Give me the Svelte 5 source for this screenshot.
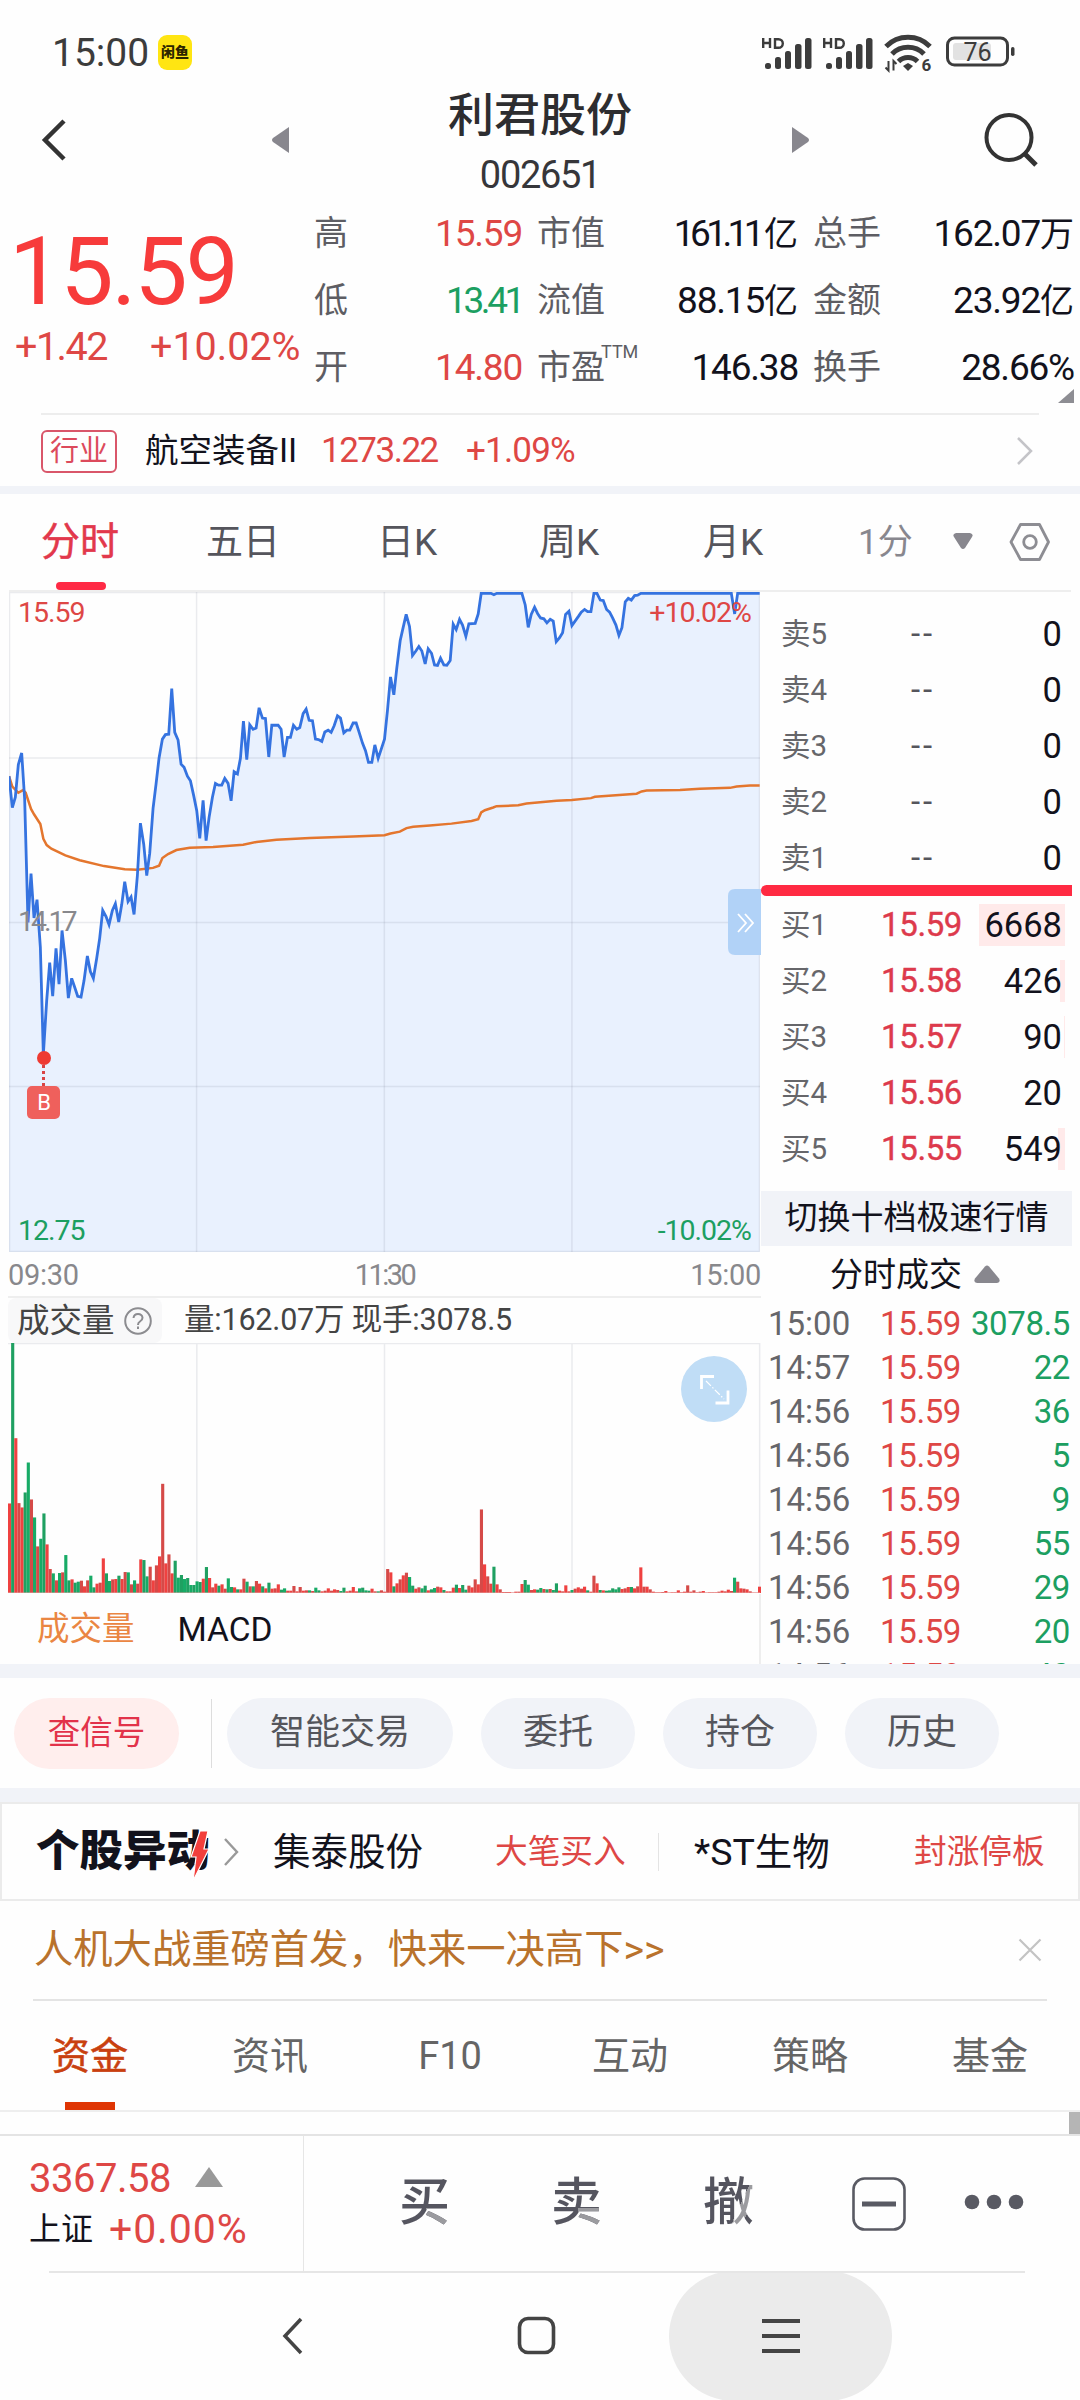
<script>
  const stats = [
    { label: '高', value: '15.59', tone: 'up' },
    { label: '市值', value: '161.11', unit: '亿', fit: 'narrow' },
    { label: '总手', value: '162.07', unit: '万' },
    { label: '低', value: '13.41', tone: 'down', fit: 'tight' },
    { label: '流值', value: '88.15', unit: '亿' },
    { label: '金额', value: '23.92', unit: '亿' },
    { label: '开', value: '14.80', tone: 'up' },
    { label: '市盈', sup: 'TTM', value: '146.38' },
    { label: '换手', value: '28.66%' }
  ];

  const periods = ['分时', '五日', '日K', '周K', '月K'];

  const asks = [5, 4, 3, 2, 1];
  const bids = [
    { n: 1, price: '15.59', qty: '6668', bar: 86 },
    { n: 2, price: '15.58', qty: '426', bar: 5 },
    { n: 3, price: '15.57', qty: '90', bar: 1 },
    { n: 4, price: '15.56', qty: '20', bar: 0 },
    { n: 5, price: '15.55', qty: '549', bar: 7 }
  ];

  const ticks = [
    ['15:00', '3078.5'], ['14:57', '22'], ['14:56', '36'], ['14:56', '5'], ['14:56', '9'],
    ['14:56', '55'], ['14:56', '29'], ['14:56', '20'], ['14:56', '40']
  ];

  // Intraday price line, in chart units (2252 x 1476, one minute = 9.38)
  const price =
    '28,438 38,508 47,485 56,412 66,386 75,490 85,765 94,656 103,755 112,714 122,820 131,1060 141,940 150,855 159,930 169,823 178,903 187,783 197,850 206,934 216,890 225,910 234,930 244,932 253,895 263,840 272,875 281,890 291,845 300,800 309,738 319,752 328,770 338,738 347,723 357,764 366,725 375,674 385,718 394,708 403,747 413,660 422,543 432,590 441,660 450,610 460,510 469,455 478,397 488,355 497,345 507,344 516,242 525,340 535,357 544,411 553,418 563,438 572,448 582,482 591,515 600,577 610,492 619,582 628,530 638,485 647,454 656,458 666,458 675,443 685,454 694,493 703,428 713,433 722,398 731,315 741,401 750,323 760,333 769,330 778,285 788,308 797,309 807,395 816,324 835,324 844,333 853,395 863,351 872,351 881,324 891,333 900,329 910,298 919,288 928,313 938,314 947,355 956,356 966,360 975,339 985,335 994,340 1003,325 1013,303 1022,308 1032,341 1041,335 1050,335 1060,319 1069,319 1078,340 1088,364 1097,381 1106,407 1116,407 1125,368 1135,398 1144,378 1154,355 1163,290 1172,216 1182,256 1191,195 1201,135 1210,105 1219,76 1229,103 1238,168 1248,158 1257,148 1266,158 1276,187 1285,153 1295,163 1304,189 1313,190 1322,174 1332,189 1341,190 1351,179 1360,98 1369,110 1379,87 1388,100 1398,125 1407,97 1426,96 1435,75 1444,29 1473,29 1482,32 1491,29 1566,29 1576,55 1585,105 1594,76 1604,60 1613,74 1622,84 1632,86 1641,95 1651,87 1660,91 1669,137 1679,128 1688,117 1697,76 1707,69 1716,101 1735,81 1744,71 1754,65 1763,70 1773,70 1782,29 1791,29 1801,44 1810,45 1820,65 1829,71 1838,84 1848,100 1857,123 1866,106 1876,48 1885,40 1894,44 1904,34 1913,33 1923,29 2194,29 2204,75 2213,29 2279,29';

  const average =
    '28,438 38,461 56,475 70,469 78,475 94,511 103,523 122,545 131,578 141,592 155,600 197,615 240,626 313,639 375,646 413,647 460,643 478,638 488,621 505,612 530,603 570,598 640,596 730,591 770,585 830,580 930,576 1060,573 1154,570 1172,566 1200,562 1220,554 1240,551 1290,548 1355,544 1415,538 1435,534 1444,519 1455,514 1480,508 1490,505 1555,503 1580,499 1670,493 1716,491 1773,487 1785,484 1910,477 1925,472 1940,470 2040,469 2100,466 2190,464 2210,461 2250,459 2279,459';

  // Volume per minute: R = rising, G = falling, then the bar's height
  const volumes =
    'R269 G751 R465 R270 R257 G302 G392 R281 G227 R140 G163 G239 R146 R72 G59 R38 G60 R62 G114 G38 R41 G31 G34 R37 R20 R38 G52 G17 R28 R31 R104 G59 G36 R41 R42 G52 R42 R63 G62 R26 G38 R28 R101 G99 G50 R79 R38 R83 R110 R328 R89 R116 R59 G97 G46 G54 G42 G45 G24 G24 G35 G33 R43 G78 R45 R17 R28 G22 R26 R13 G44 G18 R17 G11 R11 R43 G34 R20 G20 R36 R28 G20 R14 G31 R13 R14 R26 G10 G14 R7 R7 R21 R5 R18 R7 R8 G8 R6 G16 G8 R5 R7 R14 R7 R11 R9 G6 G16 R5 R7 R18 R5 G14 G16 G8 G7 R13 R5 G5 R8 R4 R72 R62 G20 R29 R41 R53 R61 G48 G22 R13 R17 G14 G22 R8 G11 G15 R19 R17 G9 R5 R5 R16 G25 R15 G24 G10 R22 R17 R41 R26 R251 R86 R50 R28 G79 R26 R11 R3 R3 R3 R1 R4 R4 R27 G39 G25 R9 R11 G10 G15 R12 G11 R12 G9 G29 R7 R5 R23 R5 G9 R13 R17 R13 R19 G8 R4 R52 R29 G9 R8 G7 G8 G14 G11 G17 R12 R14 R18 G18 R14 R20 R77 R19 R19 R11 R4 R2 R2 R3 R6 R1 R2 R2 R8 R2 R4 R23 R4 R8 R2 R4 R6 R1 R2 R2 R2 R4 R7 R5 R10 R6 G46 R34 R14 R13 R11 R5 R1 R1 R19'
      .split(' ')
      .map((v) => ({ up: v[0] === 'R', h: +v.slice(1) }));

  const infoTabs = ['资金', '资讯', 'F10', '互动', '策略', '基金'];
  const actions = ['智能交易', '委托', '持仓', '历史'];
</script>

<div class="screen">
  <div class="status">
    <span class="clock">15:00</span>
    <span class="app-badge">闲鱼</span>
    <svg class="status-icons" viewBox="0 0 256 46" width="256" height="46" fill="#3c3c3c">
      {#each [0, 61] as dx}
        <g transform="translate({dx} 0)">
          <path d="M1.200 5v10M8 5v10M1.200 10H8M13 6.200h3.500a4 4 0 0 1 0 8.600H13z" fill="none" stroke="#3c3c3c" stroke-width="2.400" />
          <rect x="3" y="30" width="6" height="6" rx="2.500" />
          <rect x="13" y="24" width="6" height="12" rx="2.500" />
          <rect x="23" y="18" width="6" height="18" rx="2.500" />
          <rect x="33" y="11" width="6.500" height="25" rx="2.500" />
          <rect x="43" y="5" width="6.500" height="31" rx="2.500" />
        </g>
      {/each}
      <g fill="none" stroke="#3c3c3c" stroke-width="5">
        <path d="M124 13.500a31 31 0 0 1 44 0" />
        <path d="M130 21a22.500 22.500 0 0 1 32 0" />
        <path d="M136.500 28.500a13.500 13.500 0 0 1 19 0" />
      </g>
      <path d="M141 33l5-3 5 3-5 5z" />
      <path d="M126.500 28v9.500l-3-3M131.500 37.500V28l3 3" fill="none" stroke="#3c3c3c" stroke-width="2" />
      <text x="159.500" y="38" class="gen">6</text>
      <rect x="185.500" y="5" width="60" height="27" rx="7" fill="none" stroke="#3c3c3c" stroke-width="3" />
      <rect x="191" y="10" width="38" height="17" rx="3" fill="#e2e2e2" />
      <rect x="249" y="14" width="3.500" height="9" rx="1.700" />
      <text x="215.500" y="27.500" class="level">76</text>
    </svg>
  </div>

  <header class="title-bar">
    <svg class="back" width="26" height="42" viewBox="0 0 26 42"><path d="M23 2 4 21l19 19" fill="none" stroke="#333" stroke-width="4.500" /></svg>
    <svg class="prev" width="20" height="28" viewBox="0 0 20 28"><path d="M18 1v26L2 16q-2-2 0-4z" fill="#88878e" /></svg>
    <div class="name">
      <h1>利君股份</h1>
      <span>002651</span>
    </div>
    <svg class="next" width="20" height="28" viewBox="0 0 20 28"><path d="M1 1v26l16-11q2-2 0-4z" fill="#88878e" /></svg>
    <svg class="search" width="56" height="56" viewBox="0 0 56 56" fill="none" stroke="#333" stroke-width="4"><circle cx="26" cy="25.500" r="22.500" /><path d="m42 42 11 11" stroke-width="5" /></svg>
  </header>

  <section class="quote">
    <div class="last up">
      <strong>15.59</strong>
      <div><span>+1.42</span><span>+10.02%</span></div>
    </div>
    <div class="stats">
      {#each stats as s}
        <span class="label">{s.label}{#if s.sup}<sup>{s.sup}</sup>{/if}</span>
        <span class="value {s.tone ?? ''} {s.fit ?? ''}">{s.value}{#if s.unit}<i>{s.unit}</i>{/if}</span>
      {/each}
      <svg class="corner" width="16" height="14" viewBox="0 0 16 14"><path d="M16 0v14H0z" fill="#8d8d93" /></svg>
    </div>
  </section>

  <section class="industry">
    <span class="tag">行业</span>
    <span class="sector">航空装备II</span>
    <span class="up idx">1273.22</span>
    <span class="up chg">+1.09%</span>
    <svg width="18" height="30" viewBox="0 0 18 30"><path d="m2 2 13 13L2 28" fill="none" stroke="#c4c4c8" stroke-width="2.500" /></svg>
  </section>
  <div class="band thin"></div>

  <nav class="periods">
    {#each periods as p, i}
      <span class:active={i === 0}>{p}</span>
    {/each}
    <span class="minute">1分</span>
    <svg class="caret" width="20" height="17" viewBox="0 0 20 17"><path d="M3 0h14q4 1 2 4l-7 11q-2 2-4 0L1 4Q-1 1 3 0z" fill="#88878e" /></svg>
    <svg class="gear" width="42" height="40" viewBox="0 0 42 40" fill="none" stroke="#8d8d93" stroke-width="2.800" stroke-linejoin="round"><path d="M11.500 2.500h19l9 17.500-9 17.500h-19L2 20z" /><circle cx="21" cy="20" r="6.300" /></svg>
  </nav>

  <section class="market">
    <div class="charts">
      <div class="price-chart">
        <svg viewBox="28 26 2252 1476" width="751" height="660" preserveAspectRatio="none">
          <polygon points="{price} 2279,1502 28,1502" fill="#e9f1fe" />
          <g class="grid">
            <path d="M28 397H2280M28 765H2280M28 1132H2280" />
            <path d="M590.500 26V1502M1153.500 26V1502M1716 26V1502" />
            <rect x="29.500" y="27" width="2249" height="1474" />
          </g>
          <polyline class="line avg" points={average} />
          <polyline class="line" points={price} />
        </svg>
        <div class="axis"><span class="up">15.59</span><span class="up">+10.02%</span></div>
        <div class="axis"><span class="mid">14.17</span></div>
        <div class="axis"><span class="down">12.75</span><span class="down">-10.02%</span></div>
        <div class="marker"><i></i><u></u><b>B</b></div>
        <svg class="side-toggle" width="33" height="66" viewBox="0 0 33 66"><path d="M33 0H7Q0 0 0 7v52q0 7 7 7h26z" fill="#b1d2f7" /><path d="m10 25 8 9-8 9M17 25l8 9-8 9" fill="none" stroke="#fff" stroke-width="1.800" /></svg>
      </div>
      <div class="times"><span>09:30</span><span class="noon">11:30</span><span>15:00</span></div>
      <div class="vol-head">
        <span class="vol-name">成交量
          <svg width="28" height="28" viewBox="0 0 28 28" fill="none" stroke="#8c8c90" stroke-width="2"><circle cx="14" cy="14" r="12.800" /><path d="M9.500 11q.5-4 4.500-4t4.500 3.700q0 2.300-2.500 3.800-2 1.200-2 3.500M14 19.500v2.500" /></svg>
        </span>
        <span class="vol-info">量:162.07万 现手:3078.5</span>
      </div>
      <div class="vol-chart">
        <svg viewBox="24 0 2259 751" width="753" height="250" preserveAspectRatio="none">
          <g class="grid">
            <path d="M24 1.500H2280M590.500 0V751M1153.500 0V751M1716 0V751M2279 0V751" />
          </g>
          {#each volumes as v, i}
            <rect x={24 + i * 9.375} y={751 - v.h} width="9.400" height={v.h} fill={v.up ? (i % 2 ? '#d54a48' : '#ef4140') : i % 2 ? '#1fa061' : '#17ab66'} />
          {/each}
          <path d="M24 749.500H2280" stroke="#e8a6a6" stroke-width="1.500" />
        </svg>
        <svg class="expand" width="66" height="66" viewBox="0 0 66 66" fill="none" stroke="#fff"><circle cx="33" cy="33" r="33" fill="#c0ddf6" stroke="none" /><path d="M33 20.500H20.500V33M34.500 47H47V34.500" stroke-width="2.800" /><path d="m25 25 18 18" stroke-width="1.200" stroke-dasharray="7 2 1.500 2" /></svg>
      </div>
      <div class="vol-tabs"><span class="on">成交量</span><span>MACD</span></div>
    </div>

    <aside class="book">
      <div class="asks">
        {#each asks as n}
          <div class="level-row"><span>卖{n}</span><em>--</em><b>0</b></div>
        {/each}
      </div>
      <div class="split"></div>
      <div class="bids">
        {#each bids as b}
          <div class="level-row"><span>买{b.n}</span><em class="bid">{b.price}</em><b><i style="width: {b.bar}px"></i>{b.qty}</b></div>
        {/each}
      </div>
      <div class="switch">切换十档极速行情</div>
      <div class="trade-head">分时成交<svg width="26" height="18" viewBox="0 0 26 18"><path d="M11 1.500q2-2 4 0l10 12q2 4-2 4.500H3q-4-.5-2-4.500z" fill="#88878e" /></svg></div>
      <div class="ticks">
        {#each ticks as [t, q]}
          <div><span>{t}</span><span class="up">15.59</span><span class="down">{q}</span></div>
        {/each}
      </div>
    </aside>
  </section>

  <div class="band"></div>
  <section class="actions">
    <span class="signal">查信号</span>
    <i></i>
    {#each actions as a}<span class="pill">{a}</span>{/each}
  </section>
  <div class="band"></div>

  <section class="movers">
    <strong>个股异动<svg width="20" height="50" viewBox="0 0 20 50"><path d="M10 0h8l-4 18h5L3 50l3-24H1z" fill="#f23f3c" stroke="#fff" stroke-width="1.200" /></svg></strong>
    <svg class="arrow" width="17" height="30" viewBox="0 0 17 30"><path d="m2 2 12 13L2 28" fill="none" stroke="#999" stroke-width="2.400" /></svg>
    <span class="stock">集泰股份</span>
    <span class="event up">大笔买入</span>
    <i></i>
    <span class="stock second">*ST生物</span>
    <span class="event up last-event">封涨停板</span>
  </section>

  <section class="promo">
    <span>人机大战重磅首发，快来一决高下&gt;&gt;</span>
    <svg width="24" height="24" viewBox="0 0 24 24"><path d="m1.500 1.500 21 21m0-21-21 21" stroke="#c3c3c3" stroke-width="2.200" /></svg>
  </section>

  <nav class="info-tabs">
    {#each infoTabs as t, i}<span class:active={i === 0}>{t}</span>{/each}
  </nav>
  <div class="scroll-peek"><i></i></div>

  <footer class="dock">
    <div class="index">
      <div class="up">3367.58<svg width="28" height="20" viewBox="0 0 28 20"><path d="M14 0 28 20H0z" fill="#999" /></svg></div>
      <div><span>上证</span><span class="up pct">+0.00%</span></div>
    </div>
    <span class="op">买</span>
    <span class="op">卖</span>
    <span class="op withdraw">撤</span>
    <svg class="minus" width="54" height="54" viewBox="0 0 54 54" fill="none" stroke="#595a63"><rect x="1.500" y="1.500" width="51" height="51" rx="11" stroke-width="2.600" /><path d="M10 27h34" stroke-width="5" /></svg>
    <svg class="more" width="60" height="16" viewBox="0 0 60 16" fill="#595a63"><circle cx="8" cy="8" r="7.300" /><circle cx="30" cy="8" r="7.300" /><circle cx="52" cy="8" r="7.300" /></svg>
  </footer>

  <div class="sysnav">
    <svg class="nav-back" width="22" height="38" viewBox="0 0 22 38"><path d="M19 2 3 19l16 17" fill="none" stroke="#444" stroke-width="3.500" /></svg>
    <svg class="nav-home" width="40" height="40" viewBox="0 0 40 40"><rect x="2.500" y="2.500" width="34" height="34" rx="8.500" fill="none" stroke="#444" stroke-width="3.600" /></svg>
    <div class="nav-menu"><svg width="38" height="36" viewBox="0 0 38 36"><path d="M0 3h38M0 18h38M0 33h38" stroke="#444" stroke-width="4" /></svg></div>
  </div>
</div>

<style>
  :global(body) { background: #fdfdfe; }
  .screen {
    width: 1080px; height: 2400px; overflow: hidden; background: #fefefe; color: #12121c;
    font-family: Roboto, 'Noto Sans CJK SC', sans-serif; display: flex; flex-direction: column; white-space: nowrap;
  }
  .screen > * { flex: none; box-sizing: border-box; }
  svg { display: block; flex: none; }
  h1, i, em, b, u { font-style: normal; font-weight: 400; margin: 0; text-decoration: none; }
  .up { color: #de4745; }
  .down { color: #1c9f61; }

  .status { height: 84px; padding: 32px 56px 0 52px; display: flex; align-items: flex-start; }
  .clock { font-size: 39px; line-height: 42px; color: #3c3c3c; width: 106px; }
  .app-badge { margin-top: 3px; width: 34px; height: 35px; border-radius: 9px; background: #ffe512; color: #2c2600; font-size: 14px; font-weight: 800; line-height: 34px; text-align: center; }
  .status-icons { margin: 1px 6px 0 auto; }
  .gen { font-size: 17px; font-weight: 700; }
  .level { font-size: 25px; text-anchor: middle; }

  .title-bar { height: 116px; display: flex; align-items: flex-start; }
  .back { margin: 35px 0 0 41px; }
  .prev { margin: 42px 0 0 204px; }
  .name { width: 498px; margin-right: 2px; text-align: center; }
  .name h1 { font-size: 46px; line-height: 62px; font-weight: 500; color: #2d2d30; }
  .name span { display: block; font-size: 38px; line-height: 40px; margin-top: 9px; letter-spacing: -1.300px; color: #36363a; }
  .next { margin-top: 42px; }
  .search { margin: 28px 0 0 172px; }

  .quote { height: 213px; display: flex; }
  .last { width: 314px; padding-left: 9px; box-sizing: border-box; color: #f73b3b; }
  .last strong { display: block; font-weight: 400; font-size: 95px; line-height: 112px; margin-top: 16px; letter-spacing: -2.200px; }
  .last div { display: flex; gap: 44px; font-size: 39.500px; line-height: 46px; margin: -4px 0 0 6px; color: #de4745; }
  .last div span:first-child { width: 91px; letter-spacing: -1.500px; }
  .stats { position: relative; width: 760px; display: grid; grid-template-columns: 100px 108px 118px 158px 110px 166px; grid-template-rows: repeat(3, 67px); line-height: 67px; }
  .stats .label { font-size: 34px; color: #5d5d63; }
  .stats .label:nth-child(6n + 3) { padding-left: 15px; }
  .stats .label:nth-child(6n + 5) { padding-left: 15px; }
  .stats .value { font-size: 37px; text-align: right; letter-spacing: -1.200px; }
  .stats .value.narrow { letter-spacing: -4.600px; }
  .stats .value.tight { letter-spacing: -3.400px; }
  .stats .value i { font-size: 34px; letter-spacing: 0; }
  .stats .narrow i { margin-left: 4px; }
  .stats sup { font-size: 18px; line-height: 0; vertical-align: 21px; margin-left: -4px; }
  .corner { position: absolute; right: 0; bottom: 10px; }

  .industry { height: 73px; margin: 0 41px; border-top: 2px solid #ededed; display: flex; align-items: center; font-size: 35px; line-height: 40px; padding-top: 1px; }
  .tag { border: 2px solid #d9566a; border-radius: 6px; width: 76px; height: 43px; box-sizing: border-box; font-size: 29px; line-height: 38px; text-align: center; color: #dc4a5c; }
  .sector { font-size: 33.500px; margin-left: 28px; width: 176px; }
  .idx { width: 145px; letter-spacing: -1.500px; }
  .chg { letter-spacing: -.8px; }
  .industry svg { margin: 0 5px 0 auto; }
  .band { height: 14px; background: #f1f3f8; }
  .band.thin { height: 8px; }

  .periods { height: 98px; display: flex; font-size: 37px; line-height: 97px; color: #55555c; border-bottom: 2px solid #eee; margin: 0 9px; }
  .periods span { width: 165px; }
  .periods span:nth-child(1) { padding-left: 32px; font-size: 39px; }
  .periods span:nth-child(2) { width: 171px; }
  .periods span:nth-child(3) { width: 162px; }
  .periods span:nth-child(4) { width: 164px; }
  .periods span:nth-child(5) { width: 155px; }
  .periods .active { color: #e2384c; position: relative; -webkit-text-stroke: .5px #e2384c; }
  .periods .active::after { content: ''; position: absolute; left: 47px; bottom: 0; width: 50px; height: 8px; border-radius: 4px; background: #ff2a45; }
  .periods .minute { width: 95px; color: #88878e; font-size: 35px; }
  .caret { margin-top: 39px; }
  .gear { margin: 28px 0 0 36px; }

  .market { height: 1072px; display: flex; overflow: hidden; }
  .charts { width: 761px; box-sizing: border-box; padding-left: 8px; display: flex; flex-direction: column; }
  .charts > div { flex: none; box-sizing: border-box; }
  .grid { fill: none; stroke: rgba(120, 130, 150, .15); }
  .grid :global(*), .line { vector-effect: non-scaling-stroke; }
  .grid { stroke-width: 1.500px; }
  .line { fill: none; stroke: #3573e0; stroke-width: 2.800px; stroke-linejoin: miter; }
  .avg { stroke: #e4762e; stroke-width: 2.500px; }
  .price-chart { position: relative; height: 660px; display: flex; flex-direction: column; justify-content: space-between; padding: 6px 10px 6px 9px; font-size: 28.500px; line-height: 30px; margin-left: 1px; letter-spacing: -1px; }
  .price-chart > svg:first-child { position: absolute; left: 0; top: 0; }
  .axis { position: relative; display: flex; justify-content: space-between; }
  .mid { color: #88888c; letter-spacing: -3px; }
  .marker { position: absolute; left: 18px; top: 459px; width: 33px; display: flex; flex-direction: column; align-items: center; }
  .marker i { width: 14px; height: 14px; border-radius: 50%; background: #ee3a32; }
  .marker u { height: 21px; border-left: 3px dotted #d94444; box-sizing: border-box; }
  .marker b { width: 33px; height: 33px; border-radius: 5px; background: #ef605c; color: #fff; font-size: 22px; line-height: 33px; text-align: center; }
  .side-toggle { position: absolute; right: 0; top: 297px; }
  .times { height: 46px; border-bottom: 2px solid #eee; display: flex; justify-content: space-between; font-size: 29px; line-height: 47px; color: #88888c; letter-spacing: -.3px; }
  .noon { letter-spacing: -2.500px; }
  .vol-head { height: 45px; display: flex; line-height: 44px; color: #444; }
  .vol-name { width: 154px; box-sizing: border-box; padding-left: 9px; background: #f8f8f9; border-radius: 8px; font-size: 32.500px; display: flex; align-items: center; gap: 9px; }
  .vol-info { font-size: 30.500px; margin-left: 22px; letter-spacing: -.2px; }
  .vol-chart { height: 251px; position: relative; }
  .expand { position: absolute; left: 673px; top: 13px; }
  .vol-tabs { height: 70px; border-right: 2px solid #eee; display: flex; gap: 43px; padding-left: 29px; font-size: 33.500px; line-height: 71px; }
  .vol-tabs .on { color: #ea8642; font-size: 32.500px; }

  .book { width: 311px; }
  .asks { padding-top: 14px; height: 293px; box-sizing: border-box; }
  .level-row { height: 56.100px; display: grid; grid-template-columns: 92px 108px 82px; padding-left: 20px; align-items: center; line-height: 56px; }
  .level-row span { font-size: 29.500px; color: #66666a; }
  .level-row em { font-size: 33px; text-align: center; letter-spacing: 3px; color: #55555c; margin-right: 8px; }
  .level-row em.bid { text-align: right; color: #dd3a4c; font-size: 33px; letter-spacing: -.4px; padding-right: 11px; margin-right: 8px; -webkit-text-stroke: .4px #dd3a4c; }
  .level-row b { font-size: 34.500px; line-height: 42px; text-align: right; position: relative; z-index: 0; padding-right: 1px; }
  .level-row b i { position: absolute; right: -2px; top: 0; height: 42px; background: #ffeaea; z-index: -1; }
  .split { height: 11px; background: #ff2a42; border-radius: 6px 0 0 6px; }
  .bids { padding-top: 1px; height: 295px; box-sizing: border-box; }
  .switch { height: 55px; background: #f1f3f8; font-size: 33px; line-height: 54px; text-align: center; }
  .trade-head { height: 56px; font-size: 33px; line-height: 53px; display: flex; align-items: center; gap: 12px; padding-left: 69px; }
  .ticks div { height: 44px; line-height: 44px; display: grid; grid-template-columns: 100px 100px 109px; padding-left: 7px; font-size: 33px; width: 302px; }
  .ticks span:first-child { color: #66666a; }
  .ticks span:nth-child(2) { text-align: right; padding-right: 7px; letter-spacing: -.4px; }
  .ticks span:last-child { text-align: right; padding-right: 7px; letter-spacing: -.4px; }

  .actions { height: 110px; padding-left: 14px; display: flex; align-items: center; font-size: 35px; line-height: 70px; color: #55565c; }
  .actions span { border-radius: 36px; height: 71px; text-align: center; }
  .signal { width: 165px; background: #ffeeed; color: #e2324a; font-size: 32.500px; }
  .actions i { width: 1px; height: 69px; background: #ddd; margin: 0 15px 0 32px; }
  .pill { width: 154px; background: #f1f3f8; margin-right: 28px; }
  .pill:nth-of-type(2) { width: 226px; }

  .movers { height: 99px; border: 2px solid #ebebeb; display: flex; align-items: center; line-height: 60px; padding-left: 34px; }
  .movers strong { position: relative; font-size: 43.500px; font-weight: 900; width: 174px; }
  .movers strong svg { position: absolute; right: 0; top: 9px; }
  .arrow { margin-left: 13px; }
  .stock { font-size: 37.500px; width: 222px; margin-left: 33px; }
  .event { font-size: 32.700px; width: 163px; }
  .movers i { width: 1px; height: 38px; background: #e4e4e4; }
  .stock.second { margin-left: 35px; width: 220px; }
  .last-event { width: auto; }

  .promo { height: 100px; margin: 0 33px; border-bottom: 2px solid #e4e4e4; display: flex; align-items: center; justify-content: space-between; padding: 0 5px 0 1px; color: #b9722c; font-size: 39.300px; line-height: 60px; }

  .info-tabs { height: 111px; border-bottom: 2px solid #eee; display: flex; font-size: 38px; line-height: 111px; color: #656565; }
  .info-tabs span { flex: 1; text-align: center; }
  .info-tabs .active { color: #c9400f; position: relative; -webkit-text-stroke: .5px #c9400f; }
  .info-tabs .active::after { content: ''; position: absolute; left: 65px; bottom: 0; width: 50px; height: 8px; background: #df3504; }
  .scroll-peek { height: 24px; border-bottom: 2px solid #e4e4e4; display: flex; justify-content: flex-end; }
  .scroll-peek i { width: 11px; background: #b5b5b5; }

  .dock { height: 135px; display: flex; align-items: center; }
  .index { width: 304px; height: 135px; border-right: 1px solid #e6e6e6; box-sizing: border-box; padding: 18px 0 0 29px; font-size: 40px; line-height: 50px; }
  .index div { display: flex; align-items: center; }
  .index div svg { margin: -4px 0 0 24px; }
  .index .up:first-child { letter-spacing: -.5px; }
  .index div span:first-child { font-size: 32px; width: 80px; }
  .index .pct { font-size: 41px; letter-spacing: .9px; }
  .op {
    font-size: 51px; line-height: 60px; font-weight: 500; width: 51px; margin: -2px 0 0 95px; color: transparent;
    background: linear-gradient(#9b9b9f, #9b9b9f) 27px 35px / 26px 25px no-repeat, #55555f;
    -webkit-background-clip: text; background-clip: text;
  }
  .op + .op { margin-left: 101px; }
  .op.withdraw { background: linear-gradient(115deg, #55555f 0 66%, #9b9b9f 66% 80%, #55555f 80%); -webkit-background-clip: text; background-clip: text; }
  .minus { margin: 0 0 0 98px; }
  .more { margin: -3px 0 0 58px; }

  .sysnav { height: 130px; display: flex; align-items: center; position: relative; }
  .sysnav::before { content: ''; position: absolute; left: 49px; top: 0; width: 976px; height: 2px; background: #e6e6e6; }
  .nav-back { margin-left: 282px; }
  .nav-home { margin-left: 213px; }
  .nav-menu { width: 223px; height: 130px; border-radius: 65px; background: #ebebeb; margin-left: 112px; display: flex; align-items: center; justify-content: center; }
</style>
